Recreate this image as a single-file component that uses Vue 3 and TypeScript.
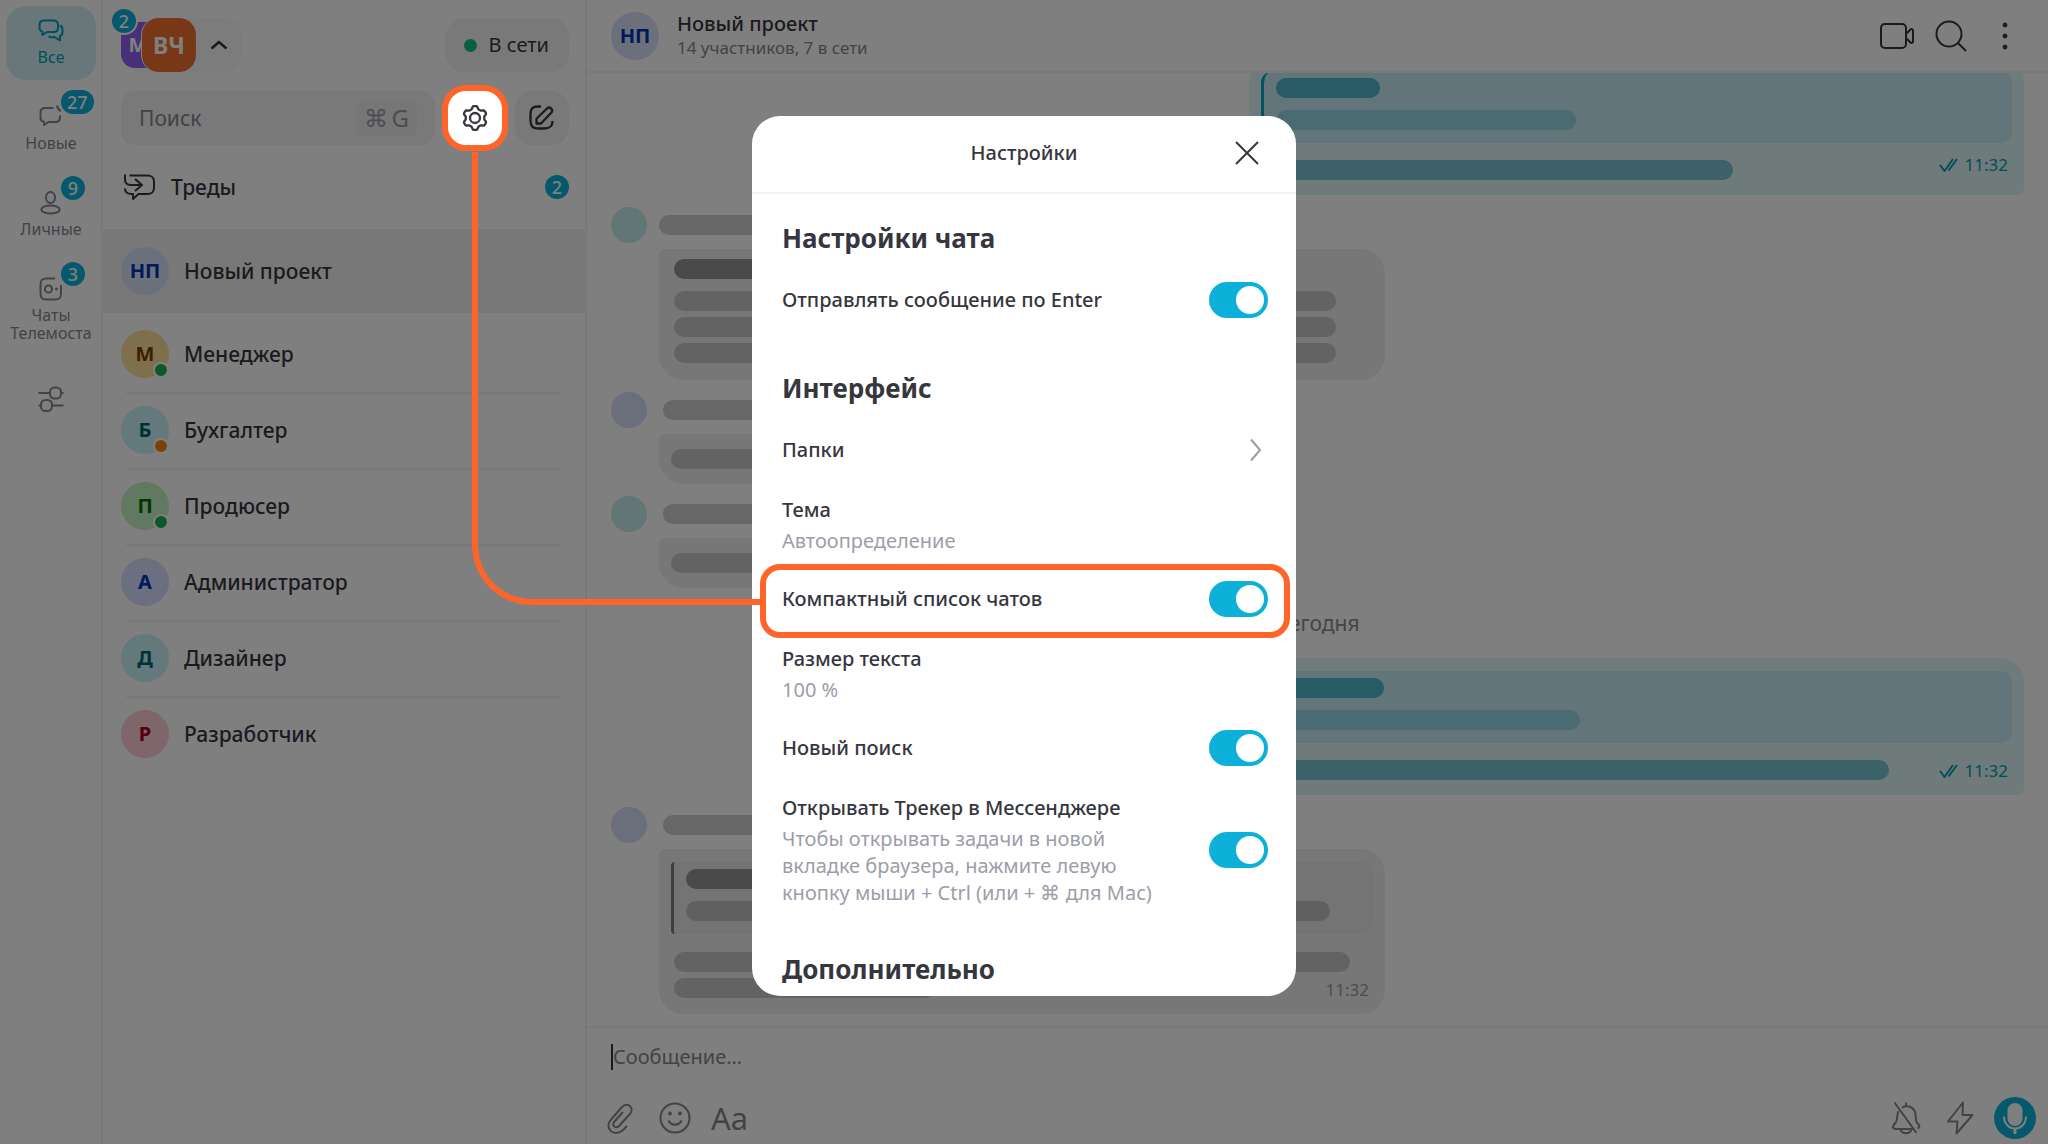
<script setup lang="ts">
import { ref } from 'vue'

interface Chat {
  name: string
  initials: string
  bg: string
  fg: string
  status?: 'online' | 'away'
}

const chats: Chat[] = [
  { name: 'Менеджер', initials: 'М', bg: '#ffe09a', fg: '#7a3e00', status: 'online' },
  { name: 'Бухгалтер', initials: 'Б', bg: '#c8f2f8', fg: '#006272', status: 'away' },
  { name: 'Продюсер', initials: 'П', bg: '#c2f0c2', fg: '#006c00', status: 'online' },
  { name: 'Администратор', initials: 'А', bg: '#d6deff', fg: '#0030b8' },
  { name: 'Дизайнер', initials: 'Д', bg: '#c8f2f8', fg: '#006272' },
  { name: 'Разработчик', initials: 'Р', bg: '#ffccd4', fg: '#a80020' },
]

const sendByEnter = ref(true)
const compactList = ref(true)
const newSearch = ref(true)
const openTracker = ref(true)

// Outline of the six-toothed gear, sampled in polar coordinates
const gearPath =
  Array.from({ length: 120 }, (_, i) => {
    const a = (i / 120) * Math.PI * 2
    const r = 10.6 + 1.4 * Math.tanh(2 * Math.cos(6 * a))
    const x = (14 + r * Math.sin(a)).toFixed(2)
    const y = (14 - r * Math.cos(a)).toFixed(2)
    return `${i ? 'L' : 'M'}${x} ${y}`
  }).join('') + 'Z'
</script>

<template>
  <div class="app">
    <nav class="rail" aria-label="Папки чатов">
      <button class="rail-item active" type="button">
        <svg width="26" height="26" viewBox="0 0 26 26">
          <path d="M6 2.500h9.500c3 0 4.500 1.500 4.500 4.500v3c0 3-1.500 4-4.500 4H9l-4.500 3v-3.200C2.300 13.200 1.500 12 1.500 10V7C1.500 4 3 2.500 6 2.500z" />
          <path d="M22 7.500c1.800.8 2.500 2 2.500 4v2.500c0 2.200-.8 3.500-2.500 4v4.500l-5.500-3.500c-2.500.3-4.500.2-6-.5" />
        </svg>
        <span>Все</span>
      </button>
      <button class="rail-item" type="button">
        <svg width="26" height="26" viewBox="0 0 26 26">
          <path d="M15.500 4H7C4 4 2.500 5.500 2.500 8.500v5c0 2.800 1 4 3.500 4.200V21l4.500-3H17c3.500 0 5-1.500 5-4.500v-2" />
          <path d="M19 1.500c.5 3 1.500 4.500 4 5.500" />
        </svg>
        <span>Новые</span>
        <span class="badge rail-badge">27</span>
      </button>
      <button class="rail-item" type="button">
        <svg width="26" height="26" viewBox="0 0 26 26">
          <ellipse cx="12.500" cy="7.500" rx="4.500" ry="5.500" />
          <ellipse cx="12.500" cy="19.500" rx="9.200" ry="4" />
        </svg>
        <span>Личные</span>
        <span class="badge rail-badge">9</span>
      </button>
      <button class="rail-item" type="button">
        <svg width="26" height="26" viewBox="0 0 26 26">
          <path d="M17 2.500H8.500C4 2.500 2.500 4 2.500 8.500v9C2.500 22 4 23.500 8.500 23.500h8.500c4.500 0 6-1.500 6-6V9" />
          <circle cx="10.500" cy="13" r="3.600" />
          <circle class="solid" cx="18.500" cy="13" r="1" />
        </svg>
        <span>Чаты Телемоста</span>
        <span class="badge rail-badge">3</span>
      </button>
      <button class="rail-item filters" type="button" aria-label="Настроить папки">
        <svg width="26" height="26" viewBox="0 0 26 26">
          <path d="M.500 7H11.500M23 7h2.500M.500 19.500H2.500M14 19.500h11.500" />
          <rect x="12" y="1.500" width="11" height="11" rx="4.500" />
          <rect x="3" y="14" width="11" height="11" rx="4.500" />
        </svg>
      </button>
    </nav>

    <aside class="sidebar">
      <div class="account-row">
        <button class="accounts" type="button" aria-label="Аккаунты">
          <span class="account second">М</span>
          <span class="account first">ВЧ</span>
          <svg width="18" height="10" viewBox="0 0 18 10"><path d="M1.500 8.500L9 2l7.500 6.500" /></svg>
          <span class="badge account-badge">2</span>
        </button>
        <button class="presence" type="button"><i></i>В сети</button>
      </div>

      <div class="search-row">
        <label class="search">
          <input type="text" placeholder="Поиск" aria-label="Поиск" />
          <kbd><span>⌘</span>G</kbd>
        </label>
        <button class="square spot" type="button" aria-label="Настройки">
          <svg width="28" height="28" viewBox="0 0 28 28">
            <path :d="gearPath" />
            <circle cx="14" cy="14" r="5" />
          </svg>
        </button>
        <button class="square" type="button" aria-label="Новый чат">
          <svg width="28" height="28" viewBox="0 0 28 28">
            <path d="M13 2.500h-2.500c-6 0-8 2-8 8v5c0 7 2 9 9 9h4.500c6 0 8.500-2 8.500-7.500" />
            <path d="M8.500 19.500v-4.800L19.200 4.300c2.700-2.300 6.500 1.400 4.200 4.200L13 19.500z" />
          </svg>
        </button>
      </div>

      <a class="threads" href="#">
        <svg width="32" height="28" viewBox="0 0 32 28">
          <path d="M2 1.500v5c0 4 2 5.500 6 5.500h11M12 6l7 6-7 6" />
          <path d="M6.500 2.500H24c5 0 7 1.500 7 6.500v5.500c0 5-2 6.500-7 6.500h-8.500L10 26v-5H8.500c-4.500 0-6.500-1.500-6.500-5.500" />
        </svg>
        <span>Треды</span>
        <span class="badge">2</span>
      </a>

      <a class="chat current" href="#">
        <span class="avatar project">НП</span>
        <span class="chat-name">Новый проект</span>
      </a>
      <ul class="chats">
        <li v-for="c in chats" :key="c.name">
          <a class="chat" href="#">
            <span class="avatar" :style="{ background: c.bg, color: c.fg }">
              {{ c.initials }}
              <i v-if="c.status" :class="c.status"></i>
            </span>
            <span class="chat-name">{{ c.name }}</span>
          </a>
        </li>
      </ul>
    </aside>

    <main class="main">
      <header class="chat-head">
        <span class="avatar project">НП</span>
        <div class="chat-title">
          <h1>Новый проект</h1>
          <p>14 участников, 7 в сети</p>
        </div>
        <button type="button" aria-label="Видеозвонок">
          <svg width="36" height="36" viewBox="0 0 36 36">
            <rect x="2" y="6" width="25" height="24" rx="4" />
            <path d="M27 16l4.500-4.500c1-1 2.500-.5 2.500 1v11c0 1.500-1.500 2-2.500 1L27 20" />
          </svg>
        </button>
        <button type="button" aria-label="Поиск по чату">
          <svg width="36" height="36" viewBox="0 0 36 36">
            <circle cx="16" cy="16" r="12.500" /><path d="M25 25l8 8" />
          </svg>
        </button>
        <button type="button" aria-label="Ещё">
          <svg width="36" height="36" viewBox="0 0 36 36">
            <g class="solid"><circle cx="18" cy="7" r="2" /><circle cx="18" cy="18" r="2" /><circle cx="18" cy="29" r="2" /></g>
          </svg>
        </button>
      </header>

      <section class="feed" aria-label="Сообщения">
        <article class="bubble own">
          <div class="quote"><i class="bar w104 strong"></i><i class="bar w300"></i></div>
          <i class="bar w472 body"></i>
          <time><svg width="20" height="16" viewBox="0 0 20 16"><path d="M1 8l4.500 6L14 2M9.500 13.500L18 2" /></svg>11:32</time>
        </article>

        <article class="incoming">
          <div class="author flush"><i class="face teal"></i><i class="bar w300 name"></i></div>
          <div class="bubble wide">
            <i class="bar w300 strong"></i><i class="bar w662 spaced"></i><i class="bar w662"></i><i class="bar w662"></i>
          </div>
        </article>

        <article class="incoming">
          <div class="author"><i class="face blue"></i><i class="bar w300 name"></i></div>
          <div class="bubble short"><i class="bar w472"></i></div>
        </article>

        <article class="incoming">
          <div class="author"><i class="face teal"></i><i class="bar w300 name"></i></div>
          <div class="bubble short"><i class="bar w472"></i></div>
        </article>

        <p class="day">Сегодня</p>

        <article class="bubble own low">
          <div class="quote"><i class="bar w108 strong"></i><i class="bar w304"></i></div>
          <i class="bar w628 body"></i>
          <time><svg width="20" height="16" viewBox="0 0 20 16"><path d="M1 8l4.500 6L14 2M9.500 13.500L18 2" /></svg>11:32</time>
        </article>

        <article class="incoming">
          <div class="author"><i class="face blue"></i><i class="bar w300 name"></i></div>
          <div class="bubble quoted">
            <div class="quote"><i class="bar w300 strong"></i><i class="bar w644 cool"></i></div>
            <i class="bar w676 body"></i><i class="bar w262"></i>
            <time>11:32</time>
          </div>
        </article>
      </section>

      <footer class="composer">
        <input type="text" placeholder="Сообщение…" aria-label="Сообщение" />
        <div class="tools">
          <button type="button" aria-label="Прикрепить файл">
            <svg width="36" height="36" viewBox="0 0 36 36">
              <path d="M27 26l-4 4c-9 8.500-20-2.500-11.500-11L22 7c6-6 13 1.500 7.500 7.500L19 26c-3.500 3.500-8-1-4.500-4.500L23 12" transform="translate(-3 0)" />
            </svg>
          </button>
          <button type="button" aria-label="Эмодзи">
            <svg width="36" height="36" viewBox="0 0 36 36">
              <circle cx="18" cy="18" r="14.500" />
              <path d="M11.500 20.500c2.500 5.500 10.500 5.500 13 0" />
              <g class="solid"><circle cx="13" cy="13.500" r="1.500" /><circle cx="23" cy="13.500" r="1.500" /></g>
            </svg>
          </button>
          <button class="format" type="button">Аа</button>
          <span class="grow"></span>
          <button type="button" aria-label="Без звука">
            <svg width="36" height="36" viewBox="0 0 36 36">
              <path d="M18 2.500v4M10.500 11c-1.500 3-1 7-2 10-.8 2.500-3.500 3.500-3.500 6 0 1.500 1 2 3 2h18M14 7.500c8-3.500 13 1.500 13.500 7 .5 7 .5 7.500 3 10 1.500 1.500 1 3.500-1 4M12.500 29.500c1.500 5 9.500 5 11 0M6.500 2.500L28.500 33" />
            </svg>
          </button>
          <button type="button" aria-label="Команды">
            <svg width="36" height="36" viewBox="0 0 36 36">
              <path d="M21 2.500L6 21.500h9.500L14.500 33.500 30.500 15H20.500z" />
            </svg>
          </button>
          <button class="mic" type="button" aria-label="Голосовое сообщение">
            <svg width="42" height="42" viewBox="0 0 42 42">
              <rect class="cap" x="13.500" y="6" width="15" height="23" rx="7.500" />
              <path d="M10 19.500c0 16 22 16 22 0" />
              <path class="stem" d="M21 31v6" />
            </svg>
          </button>
        </div>
      </footer>
    </main>

    <div class="backdrop">
      <section class="modal" role="dialog" aria-modal="true" aria-labelledby="settings-title">
        <header class="modal-head">
          <h2 id="settings-title">Настройки</h2>
          <button type="button" aria-label="Закрыть">
            <svg width="24" height="24" viewBox="0 0 24 24"><path d="M1 1l22 22M23 1L1 23" /></svg>
          </button>
        </header>
        <div class="modal-body">
          <h3>Настройки чата</h3>
          <label class="row">
            <span class="label">Отправлять сообщение по Enter</span>
            <input v-model="sendByEnter" class="toggle" type="checkbox" />
          </label>

          <h3>Интерфейс</h3>
          <button class="row" type="button">
            <span class="label">Папки</span>
            <svg class="arrow" width="14" height="24" viewBox="0 0 14 24"><path d="M2 1.500L11 12 2 22.500" /></svg>
          </button>
          <button class="row" type="button">
            <span class="label">Тема<small>Автоопределение</small></span>
          </button>
          <label class="row highlighted">
            <span class="label">Компактный список чатов</span>
            <input v-model="compactList" class="toggle" type="checkbox" />
          </label>
          <button class="row" type="button">
            <span class="label">Размер текста<small>100&nbsp;%</small></span>
          </button>
          <label class="row">
            <span class="label">Новый поиск</span>
            <input v-model="newSearch" class="toggle" type="checkbox" />
          </label>
          <label class="row">
            <span class="label">Открывать Трекер в Мессенджере<small>Чтобы открывать задачи в новой<br />вкладке браузера, нажмите левую<br />кнопку мыши + Ctrl (или + ⌘ для Mac)</small></span>
            <input v-model="openTracker" class="toggle" type="checkbox" />
          </label>

          <h3 class="last">Дополнительно</h3>
        </div>
      </section>
      <div class="connector"></div>
    </div>
  </div>
</template>

<style>
body {
  margin: 0;
  overflow: hidden;
}
</style>

<style scoped>
.app {
  --ink: #36363f;
  --muted: #85858f;
  --accent: #0cb0d8;
  --line: #f3f3f3;
  --fill: #f2f2f2;
  --spot: #ff6428;
  display: flex;
  height: 100vh;
  position: relative;
  background: #fff;
  color: var(--ink);
  font: 400 21px/28px 'Noto Sans', 'Open Sans', sans-serif;
}

.app * {
  box-sizing: border-box;
}

button,
input {
  margin: 0;
  padding: 0;
  border: 0;
  background: none;
  color: inherit;
  font: inherit;
}

a {
  color: inherit;
  text-decoration: none;
}

h1,
h2,
h3,
p,
ul {
  margin: 0;
  padding: 0;
  font: inherit;
  list-style: none;
}

svg {
  display: block;
  flex: none;
  fill: none;
  stroke: currentColor;
  stroke-width: 2;
  stroke-linejoin: round;
}

svg .solid {
  fill: currentColor;
  stroke-width: 1;
}

.badge {
  min-width: 24px;
  height: 24px;
  padding: 0 6px;
  border-radius: 12px;
  background: var(--accent);
  color: #fff;
  font-size: 18px;
  font-weight: 500;
  line-height: 24px;
  text-align: center;
}

/* Folder rail */
.rail {
  display: flex;
  flex: none;
  flex-direction: column;
  gap: 12px;
  width: 103px;
  padding: 6px 5px 6px 6px;
  border-right: 2px solid var(--line);
  color: var(--muted);
}

.rail-item {
  display: flex;
  position: relative;
  flex-direction: column;
  align-items: center;
  gap: 4px;
  min-height: 74px;
  padding: 12px 0 14px;
  border-radius: 20px;
  font-size: 16px;
  line-height: 18px;
}

.rail-item.active {
  background: #d3eff4;
  color: #02a0bb;
}

.rail-item.filters {
  padding-top: 18px;
}

.rail-badge {
  position: absolute;
  top: -2px;
  left: 55px;
}

/* Chat list */
.sidebar {
  display: flex;
  flex: none;
  flex-direction: column;
  width: 484px;
  border-right: 2px solid var(--line);
}

.account-row,
.search-row {
  display: flex;
  padding: 18px 16px 0 18px;
}

.account-row {
  justify-content: space-between;
}

.accounts {
  display: flex;
  position: relative;
  align-items: center;
  width: 121px;
  height: 54px;
  border-radius: 18px;
  background: #f8f8f8;
}

.accounts svg {
  margin-left: 13px;
  stroke-width: 2.5;
}

.account {
  display: grid;
  flex: none;
  place-items: center;
  color: #fff;
  font-weight: 700;
}

.account.second {
  width: 46px;
  height: 46px;
  border-radius: 14px;
  background: #8e5ff5;
  font-size: 20px;
  padding-right: 12px;
}

.account.first {
  width: 56px;
  height: 56px;
  margin-left: -26px;
  border: 1px solid #fff;
  border-radius: 18px;
  background: #f07030;
  font-size: 23px;
}

.account-badge {
  position: absolute;
  top: -9px;
  left: -9px;
  box-shadow: 0 0 0 2px #fff;
}

.presence {
  display: flex;
  align-items: center;
  gap: 12px;
  height: 54px;
  padding: 0 20px 0 18px;
  border-radius: 18px;
  background: var(--fill);
  font-size: 20px;
}

.presence i {
  width: 13px;
  height: 13px;
  border-radius: 50%;
  background: #0fc080;
}

.search-row {
  gap: 13px;
  padding-top: 19px;
}

.search {
  display: flex;
  flex: 1;
  align-items: center;
  min-width: 0;
  height: 54px;
  padding: 0 18px;
  border-radius: 14px;
  background: var(--fill);
}

.search input {
  flex: 1;
  min-width: 0;
}

.search input::placeholder,
.composer input::placeholder {
  color: var(--muted);
  opacity: 1;
}

kbd {
  display: flex;
  align-items: center;
  gap: 4px;
  height: 36px;
  padding: 0 8px;
  border-radius: 8px;
  background: #ececec;
  color: #9a9aa4;
  font: 400 24px/36px 'Noto Sans', sans-serif;
}

.square {
  display: grid;
  flex: none;
  place-items: center;
  width: 54px;
  height: 54px;
  border-radius: 18px;
  background: var(--fill);
}

.square svg {
  stroke-width: 2.3;
}

.spot {
  position: relative;
  z-index: 3;
  background: #fff;
  box-shadow: 0 0 0 6px var(--spot);
}

.threads {
  display: flex;
  align-items: center;
  gap: 16px;
  height: 84px;
  padding: 0 16px 0 20px;
  font-weight: 500;
}

.threads .badge {
  margin-left: auto;
}

.chat {
  display: flex;
  align-items: center;
  gap: 15px;
  height: 76px;
  padding-left: 18px;
  font-weight: 500;
}

.chat.current {
  height: 84px;
  background: #f0f0f0;
}

.chats {
  padding-top: 3px;
}

.chats li + li {
  background: linear-gradient(var(--line), var(--line)) 23px 0 / calc(100% - 48px) 2px no-repeat;
}

.avatar {
  display: grid;
  position: relative;
  flex: none;
  place-items: center;
  width: 48px;
  height: 48px;
  border-radius: 50%;
  font-size: 20px;
  font-weight: 700;
}

.avatar.project {
  background: #d8e0fb;
  color: #0034b0;
}

.avatar i {
  position: absolute;
  right: 0;
  bottom: 0;
  width: 16px;
  height: 16px;
  border: 2px solid #fff;
  border-radius: 50%;
}

.avatar .online {
  background: #18b050;
}

.avatar .away {
  background: #f58410;
}

/* Conversation */
.main {
  display: flex;
  flex: 1;
  flex-direction: column;
  min-width: 0;
}

.chat-head {
  display: flex;
  z-index: 1;
  flex: none;
  align-items: center;
  gap: 18px;
  height: 73px;
  padding: 0 25px 0 24px;
  border-bottom: 2px solid var(--line);
  background: #fff;
}

.chat-title {
  flex: 1;
}

.chat-title h1 {
  font-size: 20px;
  font-weight: 500;
  line-height: 24px;
}

.chat-title p {
  color: var(--muted);
  font-size: 17px;
  line-height: 24px;
}

.feed {
  display: flex;
  flex: 1;
  flex-direction: column;
  gap: 12px;
  justify-content: flex-end;
  min-height: 0;
  padding: 0 24px 12px;
  overflow: hidden;
}

.feed > * {
  flex: none;
}

.bubble {
  display: flex;
  position: relative;
  flex-direction: column;
  gap: 6px;
  padding: 10px 12px 17px 15px;
  border-radius: 6px 24px 24px 24px;
  background: #eeeeee;
}

.bubble.own {
  align-self: flex-end;
  width: 775px;
  padding: 13px 12px 15px;
  border-radius: 24px 24px 6px 24px;
  background: #dff4f6;
}

.quote {
  display: flex;
  flex-direction: column;
  gap: 12px;
  height: 72px;
  padding: 7px 12px;
  border-left: 3px solid #7a7a88;
  border-radius: 4px 12px 12px 4px;
  background: #e9e9e9;
}

.own .quote {
  border-color: #00a4bc;
  border-radius: 12px;
  background: #c4eaf4;
}

.bar {
  flex: none;
  height: 20px;
  max-width: 100%;
  border-radius: 10px;
  background: #c6c6c6;
}

.bar.strong {
  background: #949494;
}

.bar.cool {
  background: #c0c0c6;
}

.bar.body {
  margin-top: 12px;
}

.own .bar.body {
  margin-top: 11px;
}

.bar.spaced {
  margin-top: 6px;
}

.own .bar {
  background: #76c2d2;
}

.own .quote .bar {
  background: #94d6e2;
}

.own .quote .bar.strong {
  background: #4eb6ca;
}

.w104 { width: 104px; }
.w108 { width: 108px; }
.w262 { width: 262px; }
.w300 { width: 300px; }
.w304 { width: 304px; }
.w472 { width: 472px; }
.w628 { width: 628px; }
.w644 { width: 644px; }
.w662 { width: 662px; }
.w676 { width: 676px; }

.bubble time {
  display: flex;
  position: absolute;
  right: 16px;
  bottom: 12px;
  align-items: center;
  gap: 6px;
  color: #9a9a9a;
  font-size: 17px;
  line-height: 24px;
}

.own time {
  bottom: 18px;
  color: #00a0b4;
}

.own.low time {
  bottom: 12px;
}

.author {
  display: flex;
  align-items: center;
  gap: 16px;
  margin-bottom: 6px;
}

.author.flush {
  gap: 12px;
}

.face {
  width: 36px;
  height: 36px;
  border-radius: 50%;
}

.teal {
  background: #c4ecea;
}

.blue {
  background: #d6dcf6;
}

.bar.name {
  background: #cecece;
}

.incoming .bubble {
  width: 726px;
  margin-left: 48px;
}

.incoming .bubble.short {
  width: 520px;
  padding: 15px 12px;
}

.incoming .bubble.quoted {
  padding: 13px 12px 16px;
}

.quoted .bar.body,
.quoted .bar.w262 {
  margin-left: 3px;
}

.day {
  height: 46px;
  color: #8a8a8a;
  line-height: 46px;
  text-align: center;
}

.composer {
  flex: none;
  padding: 16px 12px 5px 24px;
  border-top: 2px solid var(--line);
}

.composer input {
  display: block;
  width: 100%;
  height: 26px;
  border-left: 2px solid var(--ink);
  outline: 0;
  font-size: 20px;
}

.tools {
  display: flex;
  align-items: center;
  gap: 18px;
  margin: 27px 0 0 -8px;
  color: var(--muted);
}

.format {
  font-size: 31px;
  line-height: 36px;
}

.grow {
  flex: 1;
}

.mic {
  margin-left: -2px;
  border-radius: 50%;
  background: var(--accent);
  color: #fff;
}

.mic .cap {
  fill: currentColor;
  stroke: none;
}

.mic .stem {
  stroke-width: 3;
}

/* Settings dialog */
.backdrop {
  display: flex;
  position: absolute;
  z-index: 2;
  inset: 0;
  align-items: flex-start;
  justify-content: center;
  padding-top: 116px;
  background: rgba(0, 0, 0, 0.5);
}

.modal {
  display: flex;
  flex-direction: column;
  width: 544px;
  height: calc(100% - 148px);
  overflow: hidden;
  border-radius: 28px;
  background: #fff;
  font-size: 20px;
}

.modal-head {
  display: flex;
  position: relative;
  flex: none;
  align-items: center;
  justify-content: center;
  height: 78px;
  padding-bottom: 2px;
  border-bottom: 2px solid var(--line);
}

.modal-head h2 {
  font-weight: 500;
}

.modal-head button {
  position: absolute;
  right: 37px;
}

.modal-body {
  flex: 1;
  min-height: 0;
  padding: 0 28px 0 30px;
  overflow: hidden;
}

h3 {
  margin: 41px 0 17px;
  font-size: 26px;
  font-weight: 700;
  line-height: 32px;
}

h3:first-child {
  margin-top: 28px;
}

h3.last {
  margin-top: 31px;
}

.row {
  display: flex;
  position: relative;
  align-items: center;
  justify-content: space-between;
  width: 100%;
  padding: 14px 0 16px;
  text-align: left;
}

.label {
  font-weight: 500;
  line-height: 30px;
}

.label small {
  display: block;
  margin-top: 2px;
  color: #9d9daa;
  font-size: 20px;
  font-weight: 400;
  line-height: 27px;
}

.arrow {
  margin-right: 5px;
  color: #9d9daa;
}

.toggle {
  flex: none;
  width: 59px;
  height: 36px;
  margin: -4px 0;
  padding: 4px;
  border-radius: 18px;
  background: #c8c8d0;
  appearance: none;
}

.toggle::before {
  display: block;
  width: 28px;
  height: 28px;
  border-radius: 50%;
  background: #fff;
  content: '';
}

.toggle:checked {
  background: var(--accent);
}

.toggle:checked::before {
  margin-left: auto;
}

.highlighted::after {
  position: absolute;
  inset: -6px -22px -8px;
  border: 6px solid var(--spot);
  border-radius: 20px;
  content: '';
  pointer-events: none;
}

.connector {
  position: absolute;
  top: 152px;
  right: calc(50% + 262px);
  left: 472px;
  height: 453px;
  border: solid var(--spot);
  border-width: 0 0 6px 6px;
  border-bottom-left-radius: 60px;
}
</style>
